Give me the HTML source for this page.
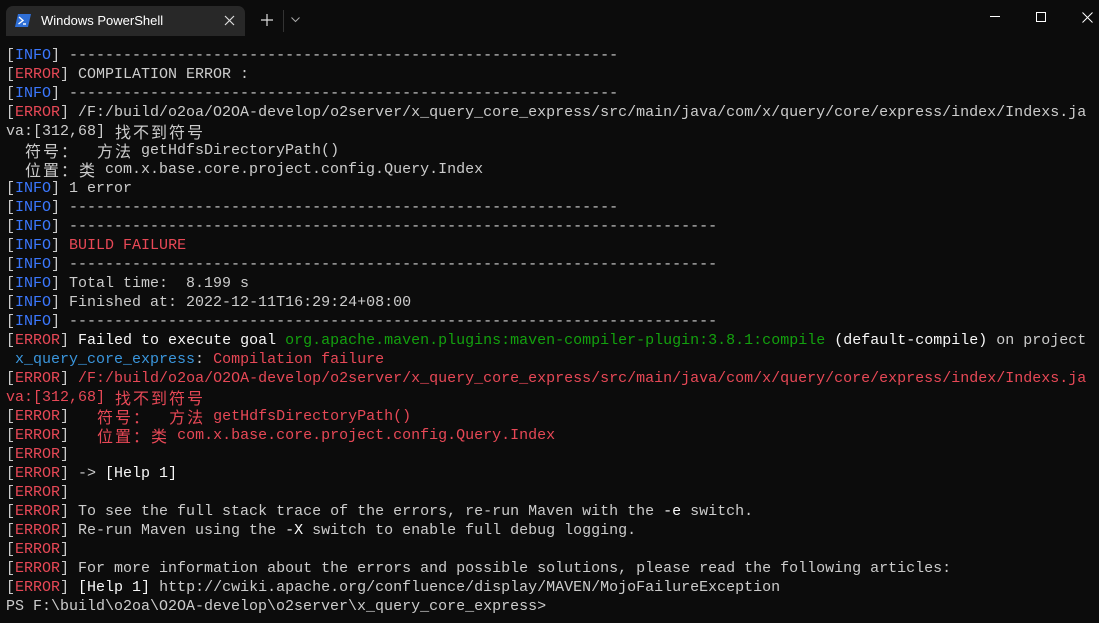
<!DOCTYPE html>
<html><head><meta charset="utf-8"><style>
html,body{margin:0;padding:0;background:#0c0c0c;width:1099px;height:623px;overflow:hidden}
.tab{position:absolute;left:6px;top:6px;width:239px;height:30px;background:#282828;border-radius:7px 7px 0 0}
.tab .t{position:absolute;left:35px;top:7px;font:13px "Liberation Sans",sans-serif;color:#fff}
pre{position:absolute;left:6px;top:46px;margin:0;font:15px/19px "Liberation Mono","Noto Sans CJK SC",monospace;color:#cccccc;white-space:pre}
i{font-style:normal;display:inline-block;width:18px;text-align:center;font-family:"Noto Sans CJK SC",sans-serif;font-size:16px;line-height:19px;vertical-align:top}
.b{color:#3b78ff}.r{color:#e74856}.g{color:#13a10e}.c{color:#3a96dd}.w{color:#f8f8f8}
</style></head><body>
<div class="tab">
<svg style="position:absolute;left:9px;top:8px" width="16" height="13" viewBox="0 0 16 13"><path d="M3 0H16L13 13H0Z" fill="#2f6fd6"/><path d="M4 3L8 6.5L3.5 10" stroke="#fff" stroke-width="1.4" fill="none"/><path d="M8 10H11" stroke="#fff" stroke-width="1.4"/></svg>
<span class="t">Windows PowerShell</span>
<svg style="position:absolute;left:218px;top:9px" width="11" height="11"><path d="M1 1L10 10M10 1L1 10" stroke="#ddd" stroke-width="1.2"/></svg>
</div>
<svg style="position:absolute;left:261px;top:14px" width="12" height="12"><path d="M6 0V12M0 6H12" stroke="#ddd" stroke-width="1.2"/></svg>
<div style="position:absolute;left:283px;top:10px;width:1px;height:22px;background:#333"></div>
<svg style="position:absolute;left:291px;top:17px" width="9" height="6"><path d="M0.5 0.5L4.5 4.5L8.5 0.5" stroke="#aaa" stroke-width="1" fill="none"/></svg>
<svg style="position:absolute;left:990px;top:16px" width="10" height="2"><path d="M0 0.5H10" stroke="#fff" stroke-width="1"/></svg>
<svg style="position:absolute;left:1036px;top:12px" width="10" height="10"><rect x="0.5" y="0.5" width="9" height="9" stroke="#fff" fill="none"/></svg>
<svg style="position:absolute;left:1082px;top:12px" width="11" height="11"><path d="M0.5 0.5L10.5 10.5M10.5 0.5L0.5 10.5" stroke="#fff" stroke-width="1"/></svg>
<pre>[<span class="b">INFO</span>] -------------------------------------------------------------
[<span class="r">ERROR</span>] COMPILATION ERROR :
[<span class="b">INFO</span>] -------------------------------------------------------------
[<span class="r">ERROR</span>] /F:/build/o2oa/O2OA-develop/o2server/x_query_core_express/src/main/java/com/x/query/core/express/index/Indexs.ja
va:[312,68] <i>找</i><i>不</i><i>到</i><i>符</i><i>号</i>
  <i>符</i><i>号</i><i>：</i>  <i>方</i><i>法</i> getHdfsDirectoryPath()
  <i>位</i><i>置</i><i>：</i><i>类</i> com.x.base.core.project.config.Query.Index
[<span class="b">INFO</span>] 1 error
[<span class="b">INFO</span>] -------------------------------------------------------------
[<span class="b">INFO</span>] ------------------------------------------------------------------------
[<span class="b">INFO</span>] <span class="r">BUILD FAILURE</span>
[<span class="b">INFO</span>] ------------------------------------------------------------------------
[<span class="b">INFO</span>] Total time:  8.199 s
[<span class="b">INFO</span>] Finished at: 2022-12-11T16:29:24+08:00
[<span class="b">INFO</span>] ------------------------------------------------------------------------
[<span class="r">ERROR</span>] <span class="w">Failed to execute goal</span> <span class="g">org.apache.maven.plugins:maven-compiler-plugin:3.8.1:compile</span> <span class="w">(default-compile)</span> on project
 <span class="c">x_query_core_express</span>: <span class="r">Compilation failure</span>
[<span class="r">ERROR</span>] <span class="r">/F:/build/o2oa/O2OA-develop/o2server/x_query_core_express/src/main/java/com/x/query/core/express/index/Indexs.ja</span>
<span class="r">va:[312,68] <i>找</i><i>不</i><i>到</i><i>符</i><i>号</i></span>
[<span class="r">ERROR</span>] <span class="r">  <i>符</i><i>号</i><i>：</i>  <i>方</i><i>法</i> getHdfsDirectoryPath()</span>
[<span class="r">ERROR</span>] <span class="r">  <i>位</i><i>置</i><i>：</i><i>类</i> com.x.base.core.project.config.Query.Index</span>
[<span class="r">ERROR</span>]
[<span class="r">ERROR</span>] -&gt; <span class="w">[Help 1]</span>
[<span class="r">ERROR</span>]
[<span class="r">ERROR</span>] To see the full stack trace of the errors, re-run Maven with the <span class="w">-e</span> switch.
[<span class="r">ERROR</span>] Re-run Maven using the <span class="w">-X</span> switch to enable full debug logging.
[<span class="r">ERROR</span>]
[<span class="r">ERROR</span>] For more information about the errors and possible solutions, please read the following articles:
[<span class="r">ERROR</span>] <span class="w">[Help 1]</span> http://cwiki.apache.org/confluence/display/MAVEN/MojoFailureException
PS F:\build\o2oa\O2OA-develop\o2server\x_query_core_express&gt;</pre>
</body></html>
